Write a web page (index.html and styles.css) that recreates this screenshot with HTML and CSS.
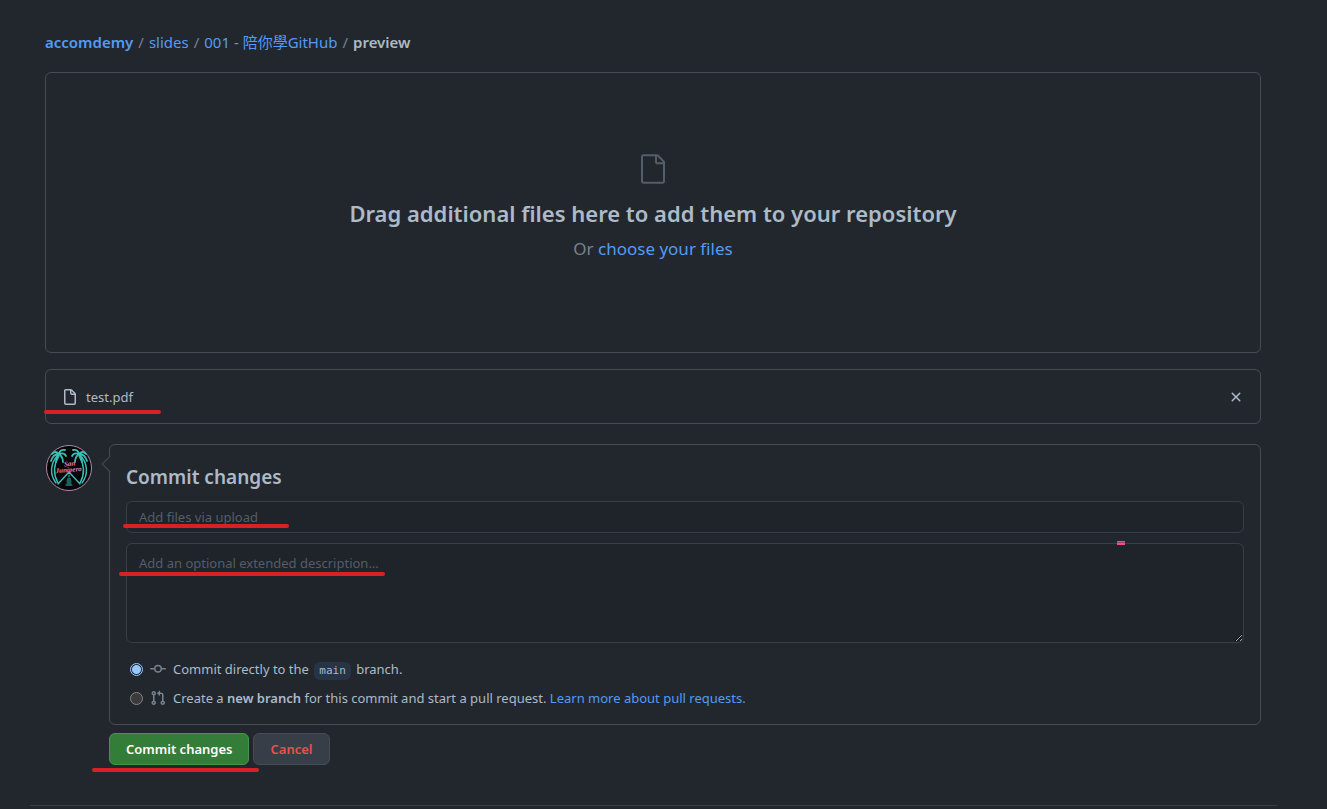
FILE: index.html
```html
<!DOCTYPE html>
<html lang="en">
<head>
<meta charset="utf-8">
<title>Upload files</title>
<link rel="stylesheet" href="styles.css">
</head>
<body>
<main class="page">
  <nav class="breadcrumb" aria-label="Breadcrumb">
    <a class="owner" href="#">accomdemy</a><span class="sep">/</span><a href="#">slides</a><span class="sep">/</span><a href="#">001 - 陪你學GitHub</a><span class="sep">/</span><strong>preview</strong>
  </nav>

  <section class="dropzone">
    <svg class="drop-icon" width="32" height="32" viewBox="0 0 24 24" fill="currentColor" aria-hidden="true"><path fill-rule="evenodd" d="M5 2.5a.5.5 0 00-.5.5v18a.5.5 0 00.5.5h14a.5.5 0 00.5-.5V8.500h-4a2 2 0 01-2-2v-4H5zm10 0v4a.5.5 0 00.5.5h4a.5.5 0 00-.146-.336l-4.018-4.018A.5.5 0 0015 2.500zM3 3a2 2 0 012-2h9.982a2 2 0 011.414.586l4.018 4.018A2 2 0 0121 7.018V21a2 2 0 01-2 2H5a2 2 0 01-2-2V3z"/></svg>
    <h1>Drag additional files here to add them to your repository</h1>
    <p>Or <a href="#">choose your files</a></p>
  </section>

  <section class="file-row">
    <svg width="16" height="16" viewBox="0 0 16 16" fill="currentColor" aria-hidden="true"><path fill-rule="evenodd" d="M3.750 1.500a.25.25 0 00-.25.25v12.500c0 .138.112.25.25.25h8.500a.25.25 0 00.25-.25V6H9.750A1.750 1.750 0 018 4.250V1.500H3.750zm5.750.560v2.190c0 .138.112.25.25.25h2.190L9.500 2.060zM2 1.750C2 .784 2.784 0 3.750 0h5.086c.464 0 .909.184 1.237.513l3.414 3.414c.329.328.513.773.513 1.237v9.086A1.750 1.750 0 0112.250 16h-8.500A1.750 1.750 0 012 14.250V1.750z"/></svg>
    <span class="file-name">test.pdf</span>
    <button class="remove" type="button" aria-label="Remove test.pdf">
      <svg width="16" height="16" viewBox="0 0 16 16" fill="currentColor" aria-hidden="true"><path fill-rule="evenodd" d="M3.720 3.720a.75.75 0 011.060 0L8 6.940l3.220-3.220a.75.75 0 111.060 1.060L9.060 8l3.220 3.220a.75.75 0 11-1.060 1.060L8 9.060l-3.220 3.220a.75.75 0 01-1.060-1.060L6.940 8 3.720 4.780a.75.75 0 010-1.060z"/></svg>
    </button>
    <span class="mark mark-file"></span>
  </section>

  <form class="commit">
    <svg class="avatar" width="48" height="48" viewBox="0 0 48 48" role="img" aria-label="Profile picture">
      <circle cx="24" cy="24" r="22.500" fill="#030508" stroke="#b586a8" stroke-width="1"/>
      <g fill="none" stroke="#3cbcb3" stroke-linecap="round" stroke-linejoin="round">
        <path stroke-width="1.400" d="M12 12C6 19 4 30 11 39M14 12C9 20 8 30 13 39M36 12c6 7 8 18 1 27M34 12c5 8 6 18 1 27M13 40l11-12 11 12"/>
        <path stroke-width="1.800" d="M14 10Q10 6 7 10M14 10Q8 10 6 17M14 10Q11 13 11 18M14 10Q15 5 20 6M14 10Q19 8 21 12M14 10Q18 13 18 18M34 10Q38 6 41 10M34 10Q40 10 42 17M34 10Q37 13 37 18M34 10Q33 5 28 6M34 10Q29 8 27 12M34 10Q30 13 30 18"/>
        <path stroke-width="1" d="M24 31v2M22.500 35h3M22 37h4M22 39h4M21 41h6"/>
      </g>
      <g class="avatar-text" transform="rotate(-5 24 24)" text-anchor="middle">
        <text x="25" y="22">San</text>
        <text x="23.500" y="28">Junipero</text>
      </g>
    </svg>
    <div class="commit-main">
      <div class="commit-box">
        <h2>Commit changes</h2>
        <div class="field">
          <input class="text-field" type="text" placeholder="Add files via upload" aria-label="Commit summary">
          <span class="mark mark-summary"></span>
        </div>
        <div class="field">
          <textarea class="text-field" placeholder="Add an optional extended description…" aria-label="Extended description"></textarea>
          <span class="mark mark-description"></span>
          <span class="speck"></span>
        </div>
        <div class="choices">
          <div class="choice">
            <input type="radio" name="target" id="direct" checked>
            <svg width="16" height="16" viewBox="0 0 16 16" fill="currentColor" aria-hidden="true"><path fill-rule="evenodd" d="M10.500 7.750a2.500 2.500 0 11-5 0 2.500 2.500 0 015 0zm1.430.75a4.002 4.002 0 01-7.860 0H.750a.75.75 0 110-1.500h3.320a4.001 4.001 0 017.860 0h3.320a.75.75 0 110 1.500h-3.320z"/></svg>
            <label for="direct">Commit directly to the <code>main</code> branch.</label>
          </div>
          <div class="choice">
            <input type="radio" name="target" id="branch">
            <svg width="16" height="16" viewBox="0 0 16 16" fill="currentColor" aria-hidden="true"><path fill-rule="evenodd" d="M7.177 3.073L9.573.677A.25.25 0 0110 .854v4.792a.25.25 0 01-.427.177L7.177 3.427a.25.25 0 010-.354zM3.750 2.500a.75.75 0 100 1.500.75.75 0 000-1.500zm-2.250.75a2.250 2.250 0 113 2.122v5.256a2.251 2.251 0 11-1.500 0V5.372A2.250 2.250 0 011.500 3.250zM11 2.500h-1V4h1a1 1 0 011 1v5.628a2.251 2.251 0 101.500 0V5A2.500 2.500 0 0011 2.500zm1 10.250a.75.75 0 111.500 0 .75.75 0 01-1.500 0zM3.750 12a.75.75 0 100 1.500.75.75 0 000-1.500z"/></svg>
            <span><label for="branch">Create a <b>new branch</b> for this commit and start a pull request.</label> <a href="#">Learn more about pull requests.</a></span>
          </div>
        </div>
      </div>
      <div class="actions">
        <button class="btn primary" type="button">Commit changes</button>
        <button class="btn danger" type="button">Cancel</button>
        <span class="mark mark-commit"></span>
      </div>
    </div>
  </form>
</main>
<hr class="divider">
</body>
</html>
```
FILE: styles.css
```css
* { box-sizing: border-box; }
body {
  margin: 0;
  background: #22272e;
  color: #adbac7;
  color-scheme: dark;
  font: 13px/20px "Noto Sans", "Noto Sans CJK TC", sans-serif;
}
a { color: #539bf5; text-decoration: none; }
h1, h2, p { margin: 0; }
svg { flex: none; }
.page { padding: 30px 66px 0 45px; }

.breadcrumb {
  height: 24px;
  font-size: 15px;
  line-height: 24px;
  white-space: nowrap;
}
.breadcrumb .owner, .breadcrumb strong { font-weight: 600; }
.sep { margin: 0 5px; color: #768390; }

.dropzone {
  display: flex;
  flex-direction: column;
  align-items: center;
  margin-top: 18px;
  padding: 80px 16px 89px;
  border: 1px solid #444c56;
  border-radius: 6px;
}
.drop-icon { color: #545d68; }
.dropzone h1 { margin-top: 12px; font-size: 22px; line-height: 32px; font-weight: 600; }
.dropzone p { margin-top: 6px; font-size: 17px; line-height: 28px; color: #768390; }

.file-row {
  position: relative;
  display: flex;
  align-items: center;
  gap: 8px;
  margin-top: 16px;
  padding: 17px 16px 16px;
  border: 1px solid #444c56;
  border-radius: 6px;
}
.remove {
  display: flex;
  margin-left: auto;
  padding: 0;
  border: 0;
  background: none;
  color: #adbac7;
}

.commit { display: flex; gap: 16px; margin-top: 20px; }
.avatar { display: block; }
.avatar-text {
  fill: #e882c0;
  font: italic bold 7px "Liberation Serif", serif;
}
.commit-main { flex: 1; min-width: 0; }
.commit-box {
  position: relative;
  padding: 16px 16px 14px;
  border: 1px solid #444c56;
  border-radius: 6px;
}
.commit-box::before {
  content: "";
  position: absolute;
  top: 13px;
  left: -6px;
  width: 11px;
  height: 11px;
  border: solid #444c56;
  border-width: 0 0 1px 1px;
  background: #22272e;
  transform: rotate(45deg);
}
.commit-box h2 { margin-bottom: 8px; font-size: 19px; line-height: 32px; font-weight: 600; }
.field { position: relative; margin-bottom: 10px; }
.text-field {
  display: block;
  width: 100%;
  margin: 0;
  padding: 5px 12px;
  border: 1px solid #373e47;
  border-radius: 6px;
  background: #1f242b;
  color: #adbac7;
  font: inherit;
}
input.text-field { height: 32px; }
textarea.text-field { height: 100px; padding-top: 9px; resize: vertical; }
.text-field::placeholder { color: #545d68; opacity: 1; }

.choices { display: grid; gap: 5px; padding: 4px 0 0 4px; }
.choice {
  display: grid;
  grid-template-columns: 13px 16px 1fr;
  align-items: center;
  column-gap: 7px;
  line-height: 24px;
}
.choice svg { color: #768390; }
.choice input {
  appearance: none;
  width: 13px;
  height: 13px;
  margin: 0;
  border: 1px solid #858585;
  border-radius: 50%;
  background: #3b3b3b;
}
.choice input:checked {
  border-color: #99c8ff;
  background: radial-gradient(circle, #99c8ff 4px, #1f2b3a 5px);
}
.choice b { font-weight: 600; }
code {
  display: inline-block;
  margin: 0 2px;
  padding: 0 5px;
  border-radius: 6px;
  background: #263445;
  font: 11px/18px "DejaVu Sans Mono", monospace;
}

.actions { position: relative; display: flex; gap: 4px; margin-top: 8px; }
.btn {
  padding: 5px 16px;
  border: 1px solid #444c56;
  border-radius: 6px;
  background: #373e47;
  font: 600 13px/20px "Noto Sans", sans-serif;
}
.primary { border-color: #46954a; background: #347d39; color: #fff; }
.danger { color: #e5534b; }

.mark {
  position: absolute;
  height: 4px;
  border-radius: 2px;
  background: #d92027;
}
.mark-file { left: -2px; top: 40px; width: 117px; }
.mark-summary { left: -3px; top: 23px; width: 166px; }
.mark-description { left: -7px; top: 29px; width: 266px; }
.mark-commit { left: -17px; top: 35px; width: 167px; }
.speck {
  position: absolute;
  right: 119px;
  top: -2px;
  width: 8px;
  height: 4px;
  background: linear-gradient(#ee4d8d 1px, #a83f6b 1px 2px, #ee4d8d 2px);
}
.divider {
  height: 1px;
  margin: 40px 50px 0 30px;
  border: 0;
  background: #373e47;
}
```
